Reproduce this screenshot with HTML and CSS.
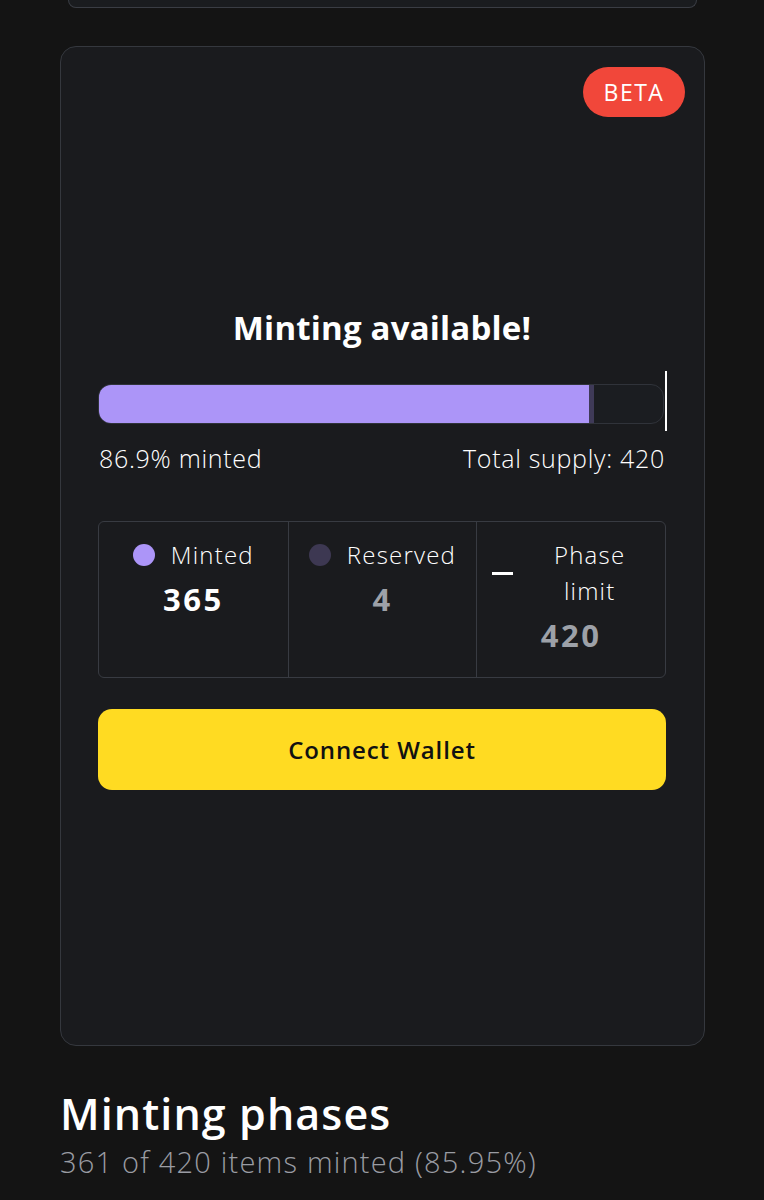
FILE: index.html
```html
<!DOCTYPE html>
<html lang="en">
<head>
    <meta charset="UTF-8">
    <meta name="viewport" content="width=device-width, initial-scale=1.0">
    <title>Minting</title>
    <link rel="stylesheet" href="styles.css">
</head>
<body>
    <div class="page">
        <div class="prev-card"></div>

        <section class="mint-card">
            <span class="badge">BETA</span>

            <h2 class="mint-title">Minting available!</h2>

            <div class="progress">
                <div class="progress-track">
                    <div class="progress-fill" style="width: 86.9%"></div>
                    <div class="progress-reserved" style="width: 0.95%"></div>
                </div>
                <span class="progress-marker"></span>
            </div>

            <div class="progress-labels">
                <span>86.9% minted</span>
                <span>Total supply: 420</span>
            </div>

            <div class="stats">
                <div class="stat">
                    <div class="stat-head">
                        <span class="dot dot-minted"></span>
                        <span class="stat-label">Minted</span>
                    </div>
                    <div class="stat-value">365</div>
                </div>
                <div class="stat">
                    <div class="stat-head">
                        <span class="dot dot-reserved"></span>
                        <span class="stat-label">Reserved</span>
                    </div>
                    <div class="stat-value muted">4</div>
                </div>
                <div class="stat">
                    <div class="stat-head">
                        <span class="dash"></span>
                        <span class="stat-label">Phase limit</span>
                    </div>
                    <div class="stat-value muted">420</div>
                </div>
            </div>

            <button class="connect-btn">Connect Wallet</button>
        </section>

        <h1 class="phases-title">Minting phases</h1>
        <p class="phases-sub">361 of 420 items minted (85.95%)</p>
    </div>
</body>
</html>
```

FILE: styles.css
```css
body {
    margin: 0;
    padding: 0;
    background-color: #141414;
    color: #fff;
    font-family: 'Open Sans', 'Lato', sans-serif;
}

.page {
    padding: 0 59px 0 60px;
}

.prev-card {
    height: 8px;
    margin: 0 8px;
    background-color: #1a1c1f;
    border: 1px solid #3a3d44;
    border-top: none;
    border-radius: 0 0 14px 14px;
    box-sizing: border-box;
}

.mint-card {
    position: relative;
    margin-top: 38px;
    height: 1000px;
    box-sizing: border-box;
    padding: 6px 38px 0 37px;
    background-color: #1a1b1e;
    border: 1px solid #35383e;
    border-radius: 16px;
    display: flex;
    flex-direction: column;
    justify-content: center;
}

.badge {
    position: absolute;
    top: 20px;
    right: 19px;
    width: 102px;
    height: 50px;
    line-height: 50px;
    text-align: center;
    border-radius: 25px;
    background-color: #f1473a;
    color: #fff;
    font-size: 23px;
    font-weight: 500;
    letter-spacing: 1.5px;
}

.mint-title {
    margin: 0;
    text-align: center;
    font-size: 33px;
    line-height: 40px;
    font-weight: 700;
    letter-spacing: 0.2px;
}

.progress {
    position: relative;
    margin-top: 36px;
    margin-right: 2px;
}

.progress-track {
    height: 40px;
    box-sizing: border-box;
    display: flex;
    background-color: #1b1d21;
    border: 1px solid #30333a;
    border-radius: 13px;
    overflow: hidden;
}

.progress-fill {
    background-color: #ac95f8;
}

.progress-reserved {
    background-color: #3f3a58;
}

.progress-marker {
    position: absolute;
    top: -13px;
    right: -3px;
    width: 2px;
    height: 60px;
    background-color: #fff;
}

.progress-labels {
    margin-top: 19px;
    display: flex;
    justify-content: space-between;
    font-size: 25px;
    line-height: 30px;
    font-weight: 300;
    letter-spacing: 0.7px;
    padding: 0 1px 0 1px;
}

.stats {
    margin-top: 48px;
    display: grid;
    grid-template-columns: 1fr 1fr 1fr;
    border: 1px solid #383b42;
    border-radius: 6px;
    height: 157px;
    box-sizing: border-box;
}

.stat {
    padding: 15px 15px 0;
    border-left: 1px solid #383b42;
    text-align: center;
}

.stat:first-child {
    border-left: none;
}

.stat-head {
    display: flex;
    justify-content: center;
    align-items: center;
    gap: 16px;
}

.stat-label {
    font-size: 24px;
    line-height: 36px;
    font-weight: 300;
    letter-spacing: 1.2px;
    text-align: center;
}

.dot {
    width: 22px;
    height: 22px;
    border-radius: 50%;
    flex-shrink: 0;
}

.dot-minted {
    background-color: #ac95f8;
}

.dot-reserved {
    background-color: #3d3852;
}

.dash {
    width: 21px;
    height: 3px;
    background-color: #fff;
    flex-shrink: 0;
}

.stat-value {
    margin-top: 6px;
    font-size: 31px;
    line-height: 40px;
    font-weight: 700;
    letter-spacing: 2.5px;
}

.stat-value.muted {
    color: #9da1a8;
}

.connect-btn {
    margin-top: 31px;
    height: 81px;
    border: none;
    border-radius: 14px;
    background-color: #ffdb22;
    color: #111;
    font-family: inherit;
    font-size: 24px;
    font-weight: 600;
    letter-spacing: 0.9px;
    cursor: pointer;
}

.phases-title {
    margin: 42px 0 0;
    font-size: 43px;
    line-height: 52px;
    font-weight: 600;
    letter-spacing: 1.1px;
}

.phases-sub {
    margin: 4px 0 0;
    font-size: 29px;
    line-height: 36px;
    font-weight: 300;
    letter-spacing: 1.2px;
    color: #9a9ca3;
}
```
